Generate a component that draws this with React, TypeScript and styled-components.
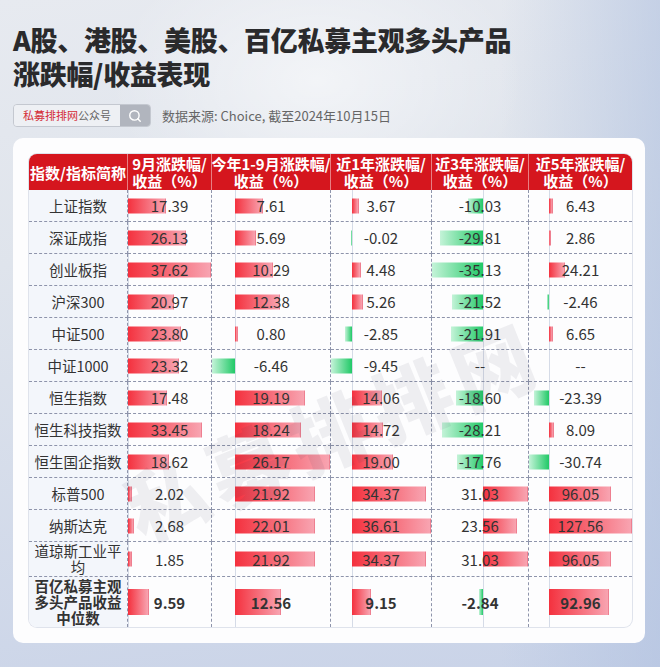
import React from "react";
import styled, { createGlobalStyle } from "styled-components";
import { Search } from "lucide-react";

type Row = { name: string; values: (number | null)[]; summary?: boolean };

const rows: Row[] = [
  { name: "上证指数", values: [17.39, 7.61, 3.67, -10.03, 6.43] },
  { name: "深证成指", values: [26.13, 5.69, -0.02, -29.81, 2.86] },
  { name: "创业板指", values: [37.62, 10.29, 4.48, -35.13, 24.21] },
  { name: "沪深300", values: [20.97, 12.38, 5.26, -21.52, -2.46] },
  { name: "中证500", values: [23.8, 0.8, -2.85, -21.91, 6.65] },
  { name: "中证1000", values: [23.32, -6.46, -9.45, null, null] },
  { name: "恒生指数", values: [17.48, 19.19, 14.06, -18.6, -23.39] },
  { name: "恒生科技指数", values: [33.45, 18.24, 14.72, -28.21, 8.09] },
  { name: "恒生国企指数", values: [18.62, 26.17, 19.0, -17.76, -30.74] },
  { name: "标普500", values: [2.02, 21.92, 34.37, 31.03, 96.05] },
  { name: "纳斯达克", values: [2.68, 22.01, 36.61, 23.56, 127.56] },
  { name: "道琼斯工业平均", values: [1.85, 21.92, 34.37, 31.03, 96.05] },
  { name: "百亿私募主观多头产品收益中位数", values: [9.59, 12.56, 9.15, -2.84, 92.96], summary: true },
];

const headers = [
  ["指数/指标简称"],
  ["9月涨跌幅/", "收益（%）"],
  ["今年1-9月涨跌幅/", "收益（%）"],
  ["近1年涨跌幅/", "收益（%）"],
  ["近3年涨跌幅/", "收益（%）"],
  ["近5年涨跌幅/", "收益（%）"],
];

const nameWidth = 99;
const colWidths = [84, 119, 101, 97, 103];

// scale per column: whole min..max range (with zero) fills the column
const scales = colWidths.map((w, c) => {
  const vals = rows.map((r) => r.values[c]).filter((v): v is number => v !== null);
  const min = Math.min(0, ...vals);
  const max = Math.max(0, ...vals);
  const span = c === colWidths.length - 1 ? w : w - 1;
  const k = span / (max - min);
  return { k, zero: -min * k };
});

const GlobalStyle = createGlobalStyle`
  html, body { margin: 0; padding: 0; }
  body { font-family: "Noto Sans CJK SC", "Noto Sans", sans-serif; }
`;

const Page = styled.div`
  width: 660px;
  height: 667px;
  box-sizing: border-box;
  overflow: hidden;
  padding: 23px 15px 0 13px;
  background:
    radial-gradient(ellipse 45% 30% at 48% 12%, rgba(255, 255, 255, 0.55), transparent 70%),
    linear-gradient(90deg, rgba(255, 255, 255, 0) 76%, rgba(176, 193, 224, 0.6) 100%),
    linear-gradient(172deg, #e7eaf0 0%, #dfe4ec 35%, #c9d3e8 100%);
`;

const Title = styled.h1`
  margin: 0;
  font-size: 27px;
  line-height: 34px;
  font-weight: 900;
  letter-spacing: -0.3px;
  color: #2a2a2c;
`;

const SourceRow = styled.div`
  display: flex;
  align-items: center;
  gap: 11px;
  margin-top: 13px;
  height: 23px;
`;

const Badge = styled.div`
  display: flex;
  height: 23px;
  box-sizing: border-box;
  border: 1px solid #c4c8d0;
  border-radius: 4px;
  overflow: hidden;
`;

const BadgeLabel = styled.div`
  background: #eef0f4;
  padding: 0 9px;
  font-size: 11px;
  line-height: 21px;
  color: #666;
  white-space: nowrap;
  span {
    color: #d42a35;
  }
`;

const BadgeIcon = styled.div`
  width: 30px;
  background: #b1b5be;
  display: flex;
  align-items: center;
  justify-content: center;
  color: #fff;
`;

const SourceText = styled.div`
  font-size: 13px;
  color: #666;
  white-space: nowrap;
`;

const Card = styled.div`
  position: relative;
  margin-top: 11px;
  width: 632px;
  box-sizing: border-box;
  padding: 16px 13px 16px 16px;
  border-radius: 10px;
  background: #fdfdfe;
  overflow: hidden;
`;

const Table = styled.div`
  display: grid;
  grid-template-columns: ${nameWidth}px ${colWidths.map((w) => `${w}px`).join(" ")};
  border-radius: 8px;
  overflow: hidden;
  box-shadow: 0 0 0 1px #dfe3ec;
`;

const HeadCell = styled.div<{ $last?: boolean }>`
  height: 36px;
  box-sizing: border-box;
  background: #d5161e;
  color: #fff;
  font-size: 15px;
  font-weight: 700;
  line-height: 17px;
  text-align: center;
  white-space: nowrap;
  display: flex;
  flex-direction: column;
  align-items: center;
  justify-content: center;
  border-right: ${(p) => (p.$last ? "none" : "1px solid rgba(255, 255, 255, 0.45)")};
`;

const NameCell = styled.div<{ $bold?: boolean; $lastRow?: boolean }>`
  min-height: 32px;
  box-sizing: border-box;
  padding: 1px 4px;
  background: #f3f6fb;
  color: #333;
  font-size: 14.5px;
  line-height: 16px;
  font-weight: ${(p) => (p.$bold ? 700 : 400)};
  text-align: center;
  display: flex;
  align-items: center;
  justify-content: center;
  border-right: 1px dashed #8e94ab;
  border-bottom: ${(p) => (p.$lastRow ? "none" : "1px dashed #8e94ab")};
`;

const ValueCell = styled.div<{ $bold?: boolean; $lastRow?: boolean; $lastCol?: boolean }>`
  position: relative;
  min-height: 32px;
  box-sizing: border-box;
  display: flex;
  align-items: center;
  justify-content: center;
  color: #333;
  font-size: 15px;
  font-weight: ${(p) => (p.$bold ? 700 : 400)};
  border-right: ${(p) => (p.$lastCol ? "none" : "1px dashed #8e94ab")};
  border-bottom: ${(p) => (p.$lastRow ? "none" : "1px dashed #8e94ab")};
`;

const Axis = styled.div`
  position: absolute;
  top: 0;
  bottom: 0;
  width: 1px;
  background: #d5dbe7;
`;

const Bar = styled.div<{ $neg: boolean; $tall?: boolean }>`
  position: absolute;
  top: 50%;
  height: ${(p) => (p.$tall ? 26 : 15)}px;
  transform: translateY(-50%);
  box-sizing: border-box;
  background: ${(p) =>
    p.$neg
      ? "linear-gradient(90deg, #c4f3d8 0%, #21c967 100%)"
      : "linear-gradient(90deg, #f4313e 0%, #f8a4b1 100%)"};
  border-right: ${(p) => (p.$neg ? "none" : "1px solid #ee7f90")};
`;

const Num = styled.span`
  position: relative;
`;

const Watermark = styled.div`
  position: absolute;
  left: 319px;
  top: 290px;
  transform: translate(-50%, -50%) rotate(-22deg);
  font-size: 80px;
  font-weight: 900;
  letter-spacing: 8px;
  white-space: nowrap;
  color: rgba(60, 60, 75, 0.075);
  pointer-events: none;
`;

export default function App() {
  return (
    <Page>
      <GlobalStyle />
      <Title>
        A股、港股、美股、百亿私募主观多头产品
        <br />
        涨跌幅/收益表现
      </Title>
      <SourceRow>
        <Badge>
          <BadgeLabel>
            <span>私募排排网</span>公众号
          </BadgeLabel>
          <BadgeIcon>
            <Search size={14} strokeWidth={2.4} />
          </BadgeIcon>
        </Badge>
        <SourceText>数据来源: Choice, 截至2024年10月15日</SourceText>
      </SourceRow>
      <Card>
        <Table>
          {headers.map((lines, i) => (
            <HeadCell key={i} $last={i === headers.length - 1}>
              {lines.map((l) => (
                <div key={l}>{l}</div>
              ))}
            </HeadCell>
          ))}
          {rows.map((row, r) => {
            const lastRow = r === rows.length - 1;
            return (
              <React.Fragment key={row.name}>
                <NameCell $bold={row.summary} $lastRow={lastRow}>
                  {row.name}
                </NameCell>
                {row.values.map((v, c) => {
                  const { k, zero } = scales[c];
                  return (
                    <ValueCell key={c} $bold={row.summary} $lastRow={lastRow} $lastCol={c === colWidths.length - 1}>
                      <Axis style={{ left: zero }} />
                      {v !== null && (
                        <Bar
                          $neg={v < 0}
                          $tall={row.summary}
                          style={{ left: v < 0 ? zero + v * k : zero, width: Math.abs(v) * k }}
                        />
                      )}
                      <Num>{v === null ? "--" : v.toFixed(2)}</Num>
                    </ValueCell>
                  );
                })}
              </React.Fragment>
            );
          })}
        </Table>
        <Watermark>私募排排网</Watermark>
      </Card>
    </Page>
  );
}
